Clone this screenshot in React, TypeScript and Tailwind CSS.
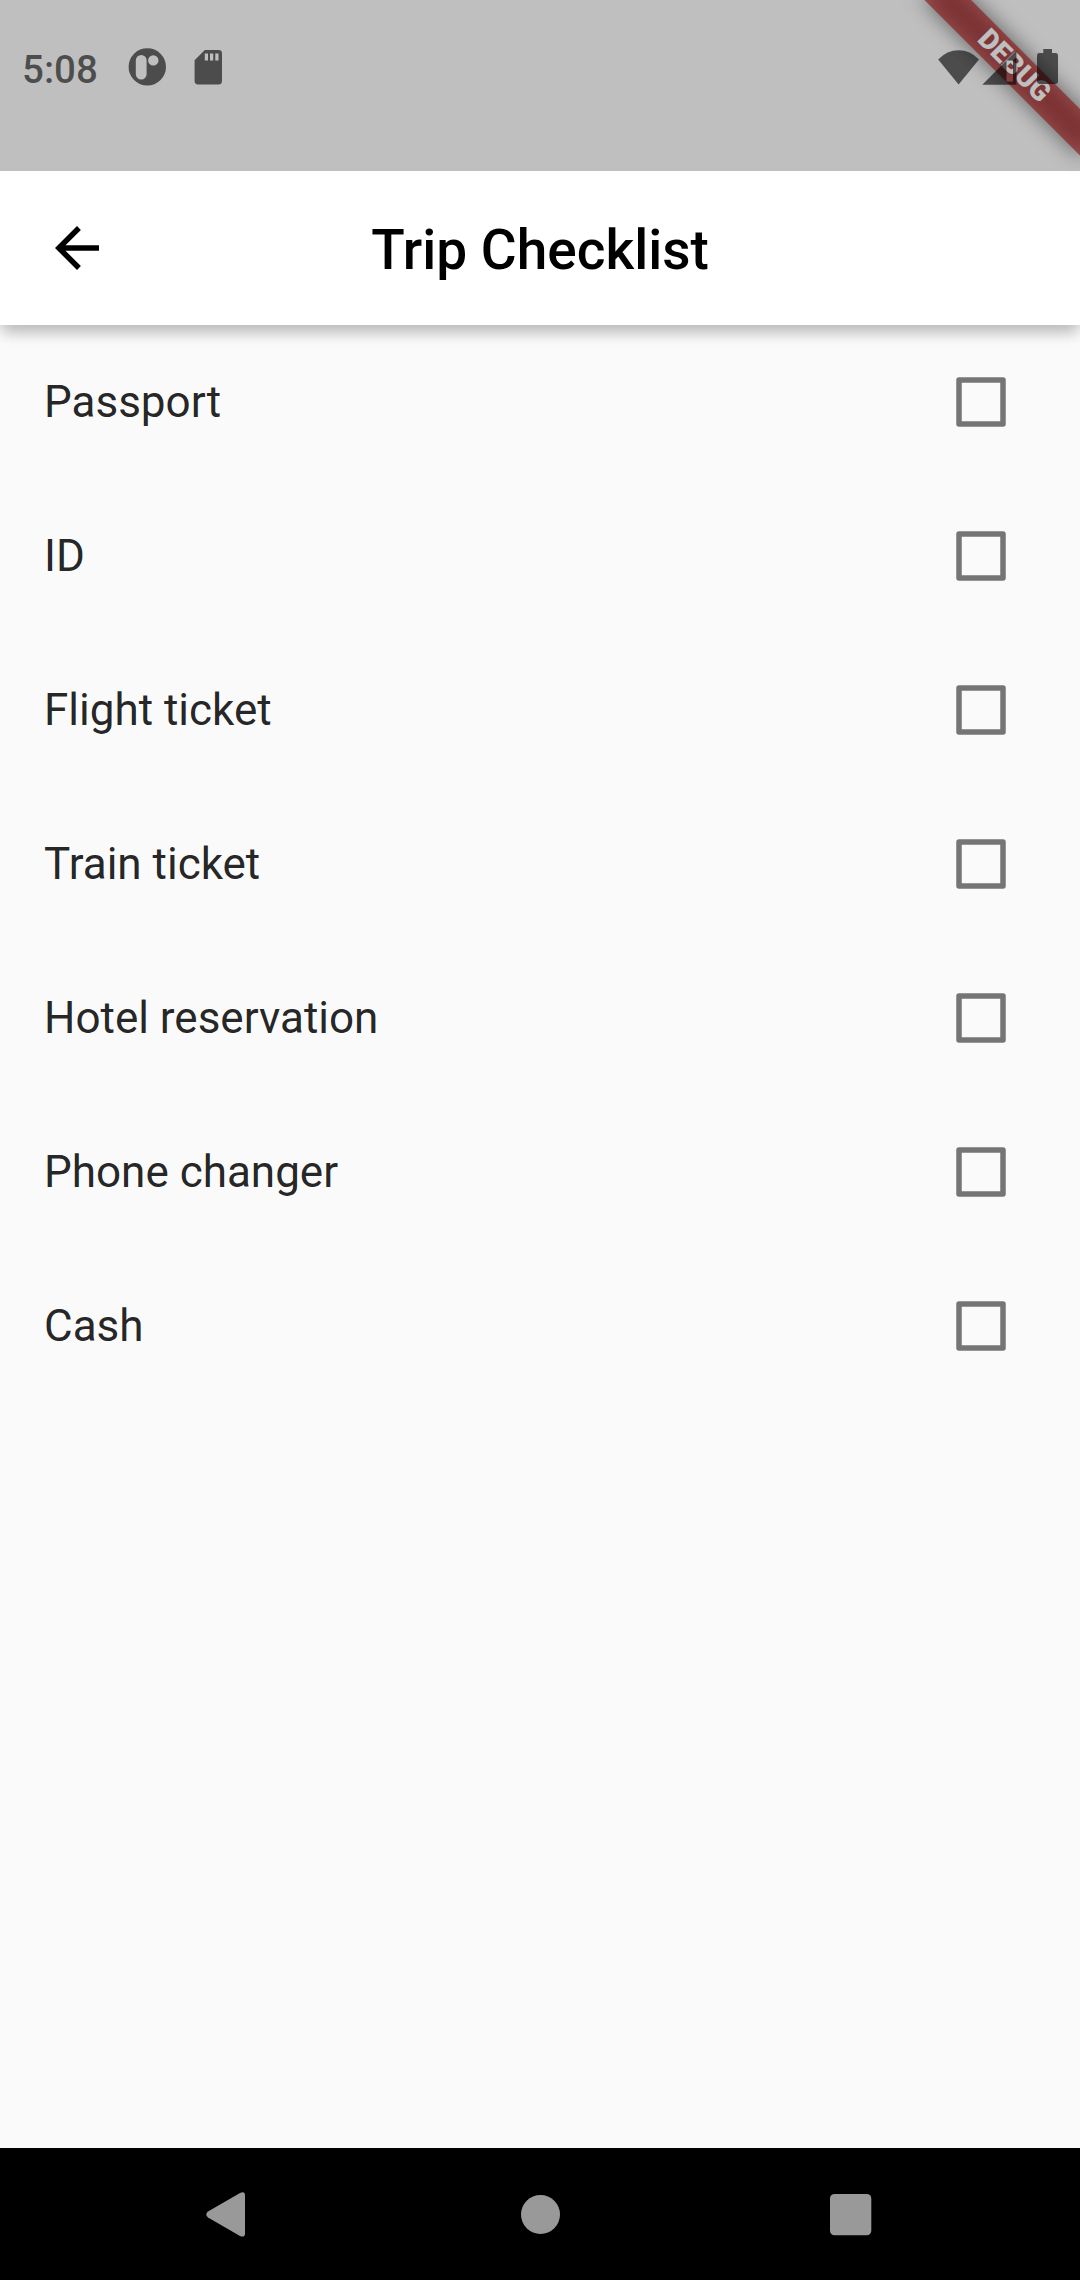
const items = [
  "Passport",
  "ID",
  "Flight ticket",
  "Train ticket",
  "Hotel reservation",
  "Phone changer",
  "Cash",
];

function DebugBanner() {
  return (
    <div className="pointer-events-none absolute inset-0 z-20 overflow-hidden">
      <div className="absolute left-[1080px] top-0 h-0 w-0 origin-top-left rotate-45">
        <div className="absolute left-[-110px] top-[77px] h-[33px] w-[220px] bg-black/50 blur-[10.9px]" />
        <div className="absolute left-[-110px] top-[77px] flex h-[33px] w-[220px] items-center justify-center bg-[#b71c1c]/63 text-[28.05px] leading-none font-black text-white">
          DEBUG
        </div>
      </div>
    </div>
  );
}

function StatusBar() {
  return (
    <div className="absolute inset-x-0 top-0 z-30 flex h-[171px] items-start bg-black/25 text-black/60">
      <div className="mt-[47px] ml-[22px] w-[76px] text-[38.5px] leading-[46px] font-medium">5:08</div>
      <svg className="mt-[48px] ml-[30px] h-[38px] w-[38px]" viewBox="0 0 38 38" fill="currentColor">
        <path
          fillRule="evenodd"
          d="M19.3.2a18.7 18.7 0 1 1 0 37.4a18.7 18.7 0 1 1 0-37.4ZM13.2 7a5.4 5.4 0 0 0-5.4 5.4v13.8a5.4 5.4 0 0 0 10.8 0V12.4A5.4 5.4 0 0 0 13.2 7ZM25.3 7.2a5.2 5.2 0 1 0 0 10.4a5.2 5.2 0 1 0 0-10.4Z"
        />
      </svg>
      <svg className="mt-[50px] ml-[28px] h-[35px] w-[28px]" viewBox="0 0 28 35" fill="currentColor">
        <path
          fillRule="evenodd"
          d="M10.8 0H24.6Q28 0 28 3.4V31Q28 34.4 24.6 34.4H4Q.6 34.4.6 31V10.3ZM10.8 3.6V10.6H14V3.6ZM16 3.6V10.6H19.2V3.6ZM21.3 3.6V10.6H24.5V3.6Z"
        />
      </svg>
      <svg className="mt-[50px] ml-auto h-[35px] w-[42px]" viewBox="0 0 42 35" fill="currentColor">
        <path d="M.2 9.4Q9 .3 20.6.3T41 9.4L20.6 34.5Z" />
      </svg>
      <svg className="mt-[50px] ml-[2px] h-[35px] w-[35px]" viewBox="0 0 35 35" fill="currentColor">
        <path fillRule="evenodd" d="M34.4.6V34.8H.3ZM24.5 10.5V31.5H31V10.5Z" />
      </svg>
      <svg className="mt-[49px] mr-[22px] ml-[20px] h-[35px] w-[21px]" viewBox="0 0 21 35" fill="currentColor">
        <path d="M6.3 0H15V4H18.6Q21 4 21 6.4V32.6Q21 35 18.6 35H2.4Q0 35 0 32.6V6.4Q0 4 2.4 4H6.3Z" />
      </svg>
    </div>
  );
}

function AppBar() {
  return (
    <header className="relative z-10 h-[325px] bg-white pt-[171px] shadow-[0_11px_14px_-3px_rgba(0,0,0,0.15),0_5px_14px_0_rgba(0,0,0,0.11),0_3px_20px_0_rgba(0,0,0,0.06)]">
      <div className="grid h-[154px] grid-cols-[154px_1fr_154px] items-center">
        <svg className="ml-[44px] h-[66px] w-[66px]" viewBox="0 0 24 24" fill="black">
          <path d="M20 11H7.83l5.59-5.59L12 4l-8 8 8 8 1.41-1.41L7.83 13H20v-2z" />
        </svg>
        <h1 className="pt-[3px] text-center text-[55px] leading-[66px] font-medium text-black">Trip Checklist</h1>
      </div>
    </header>
  );
}

export default function App() {
  return (
    <div className="relative flex h-[2280px] w-[1080px] flex-col overflow-hidden bg-[#fafafa] font-['Roboto',sans-serif]">
      <AppBar />
      <ul className="flex-1">
        {items.map((item) => (
          <li key={item} className="flex h-[154px] items-center justify-between pr-[74px] pl-[44px]">
            <span className="text-[44px] leading-[52px] text-black/87">{item}</span>
            <svg className="h-[50px] w-[50px]" viewBox="0 0 50 50" fill="none" stroke="#757575" strokeWidth="5.5">
              <path d="M3 3H47V47H3Z" strokeLinejoin="round" />
            </svg>
          </li>
        ))}
      </ul>
      <nav className="h-[132px] bg-black">
        <svg className="h-[132px] w-[1080px]" viewBox="0 0 1080 132" fill="#999">
          <path d="M240 45Q245 42.500 245 47.500V85.500Q245 90 240 88L208 69.500Q204.500 66.500 208 63.500Z" />
          <circle cx="540.500" cy="66.500" r="19.500" />
          <rect x="830" y="46" width="41.300" height="41.300" rx="4.500" />
        </svg>
      </nav>
      <DebugBanner />
      <StatusBar />
    </div>
  );
}
